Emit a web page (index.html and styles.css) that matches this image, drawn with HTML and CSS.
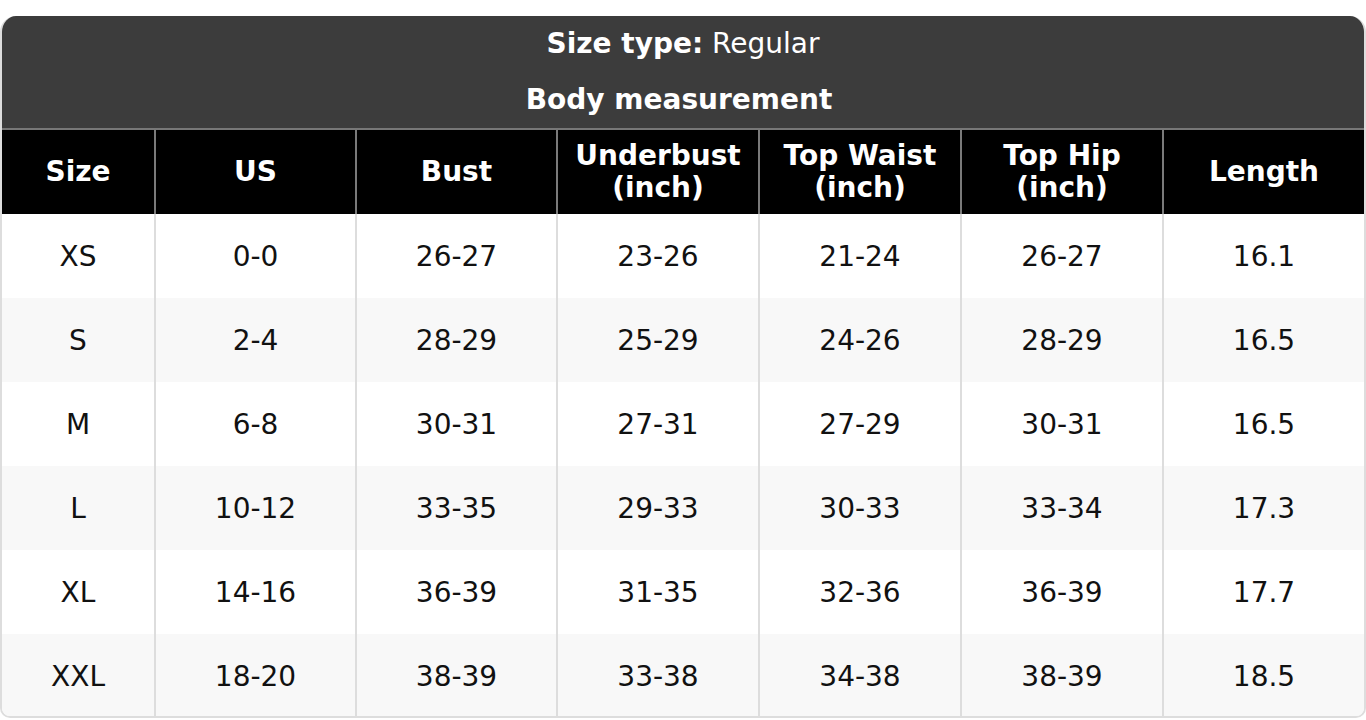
FILE: index.html
```html
<!DOCTYPE html>
<html>
<head>
<meta charset="utf-8">
<link rel="stylesheet" href="styles.css">
</head>
<body>
<div class="card">
  <div class="title">
    <div class="title-line"><b>Size type:</b> Regular</div>
    <div class="title-line title-sub"><b>Body measurement</b></div>
  </div>
  <table class="chart">
    <colgroup>
      <col class="c-size"><col class="c-a"><col class="c-a"><col class="c-b"><col class="c-b"><col class="c-b"><col>
    </colgroup>
    <thead>
      <tr><th>Size</th><th>US</th><th>Bust</th><th>Underbust<br>(inch)</th><th>Top Waist<br>(inch)</th><th>Top Hip<br>(inch)</th><th>Length</th></tr>
    </thead>
    <tbody>
      <tr><td>XS</td><td>0-0</td><td>26-27</td><td>23-26</td><td>21-24</td><td>26-27</td><td>16.1</td></tr>
      <tr><td>S</td><td>2-4</td><td>28-29</td><td>25-29</td><td>24-26</td><td>28-29</td><td>16.5</td></tr>
      <tr><td>M</td><td>6-8</td><td>30-31</td><td>27-31</td><td>27-29</td><td>30-31</td><td>16.5</td></tr>
      <tr><td>L</td><td>10-12</td><td>33-35</td><td>29-33</td><td>30-33</td><td>33-34</td><td>17.3</td></tr>
      <tr><td>XL</td><td>14-16</td><td>36-39</td><td>31-35</td><td>32-36</td><td>36-39</td><td>17.7</td></tr>
      <tr><td>XXL</td><td>18-20</td><td>38-39</td><td>33-38</td><td>34-38</td><td>38-39</td><td>18.5</td></tr>
    </tbody>
  </table>
</div>
</body>
</html>
```
FILE: styles.css
```css
html, body {
  margin: 0;
  padding: 0;
  background: #ffffff;
}
body {
  padding-top: 16px;
  font-family: "DejaVu Sans", Verdana, sans-serif;
  font-size: 28px;
}
.card {
  background: #ffffff;
  border-radius: 16px 16px 10px 10px;
  border: 2px solid #dddddd;
  border-top: none;
  overflow: hidden;
  height: 702px;
  box-sizing: border-box;
}
.title {
  background: #3c3c3c;
  color: #ffffff;
  text-align: center;
  padding: 12px 0;
  display: flex;
  flex-direction: column;
  gap: 24px;
  border-bottom: 2px solid #777777;
}
.title-line {
  line-height: 32px;
}
.title-sub {
  padding-right: 8px;
}
.chart {
  width: 100%;
  border-collapse: collapse;
  table-layout: fixed;
}
.c-size { width: 153px; }
.c-a { width: 201px; }
.c-b { width: 202px; }
.chart th {
  background: #000000;
  color: #ffffff;
  font-weight: bold;
  line-height: 32px;
  height: 84px;
  padding: 0;
  box-sizing: border-box;
  border-left: 2px solid #7a7a7a;
  text-align: center;
  vertical-align: middle;
}
.chart th:first-child, .chart td:first-child { border-left: none; }
.chart td {
  height: 84px;
  padding: 0;
  text-align: center;
  vertical-align: middle;
  color: #111111;
  border-left: 2px solid #dddddd;
}
.chart tbody tr:nth-child(even) td { background: #f8f8f8; }
```
